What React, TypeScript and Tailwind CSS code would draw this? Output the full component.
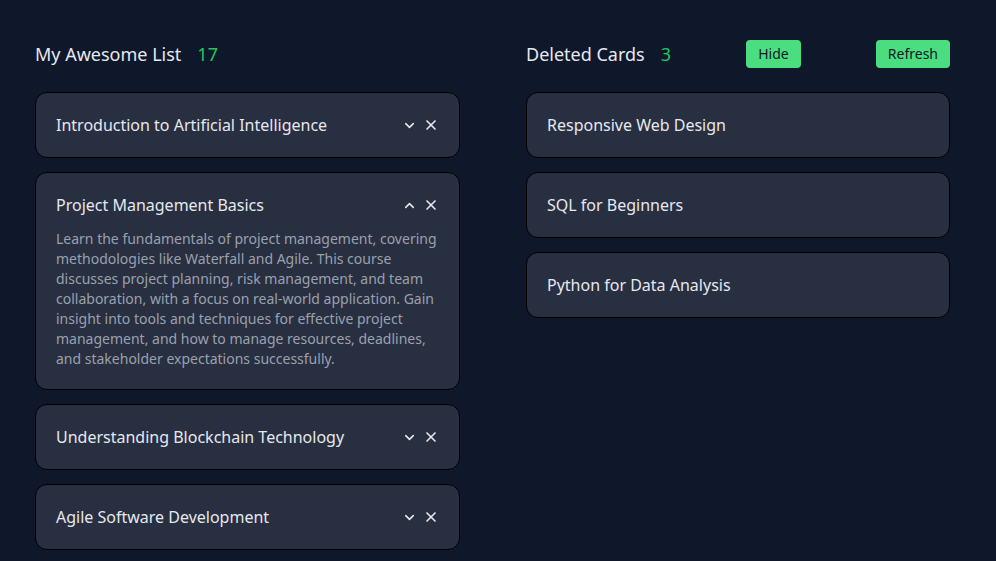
import { ChevronDown, ChevronUp, X } from "lucide-react"

type Course = { title: string; body?: string; open?: boolean }

const courses: Course[] = [
  { title: "Introduction to Artificial Intelligence" },
  {
    title: "Project Management Basics",
    open: true,
    body:
      "Learn the fundamentals of project management, covering methodologies like Waterfall and Agile. This course discusses project planning, risk management, and team collaboration, with a focus on real-world application. Gain insight into tools and techniques for effective project management, and how to manage resources, deadlines, and stakeholder expectations successfully.",
  },
  { title: "Understanding Blockchain Technology" },
  { title: "Agile Software Development" },
]

const deleted = ["Responsive Web Design", "SQL for Beginners", "Python for Data Analysis"]

function Card({ course }: { course: Course }) {
  return (
    <div className="rounded-xl border border-black bg-[#282f41] px-5 py-5">
      <div className="flex items-center justify-between">
        <span className="text-base leading-6 text-[#e6e8ee]">{course.title}</span>
        <div className="flex items-center gap-1.5 text-[#e6e8ee]">
          {course.open ? (
            <ChevronUp className="h-[15px] w-[15px]" strokeWidth={2.5} />
          ) : (
            <ChevronDown className="h-[15px] w-[15px]" strokeWidth={2.5} />
          )}
          <X className="h-4 w-4" strokeWidth={2.5} />
        </div>
      </div>
      {course.open && (
        <p className="mt-3 text-sm leading-5 text-[#9aa1ae]">{course.body}</p>
      )}
    </div>
  )
}

export default function App() {
  return (
    <div
      className="min-h-[561px] bg-[#0f172a] pl-[35px] pt-10"
      style={{ fontFamily: '"Noto Sans", sans-serif' }}
    >
      <div className="flex gap-[66px]">
        {/* Main list */}
        <section className="w-[425px]">
          <div className="mb-6 flex h-7 items-center gap-4">
            <h2 className="text-lg text-[#e6e8ee]">My Awesome List</h2>
            <span className="text-lg text-[#22c55e]">17</span>
          </div>
          <div className="flex flex-col gap-3.5">
            {courses.map((c) => (
              <Card key={c.title} course={c} />
            ))}
          </div>
        </section>

        {/* Deleted cards */}
        <section className="w-[424px]">
          <div className="mb-6 flex h-7 items-center justify-between">
            <div className="flex items-center gap-4">
              <h2 className="text-lg text-[#e6e8ee]">Deleted Cards</h2>
              <span className="text-lg text-[#22c55e]">3</span>
            </div>
            <button className="h-7 rounded bg-[#4ade80] px-3 text-sm text-[#111827]">Hide</button>
            <button className="h-7 rounded bg-[#4ade80] px-3 text-sm text-[#111827]">Refresh</button>
          </div>
          <div className="flex flex-col gap-3.5">
            {deleted.map((d) => (
              <div key={d} className="rounded-xl border border-black bg-[#282f41] px-5 py-5">
                <span className="text-base leading-6 text-[#e6e8ee]">{d}</span>
              </div>
            ))}
          </div>
        </section>
      </div>
    </div>
  )
}
